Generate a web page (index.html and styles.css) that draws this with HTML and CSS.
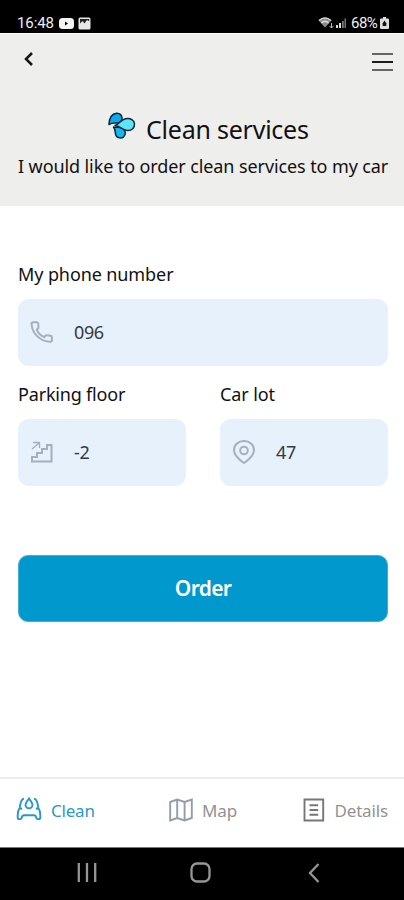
FILE: index.html
```html
<!DOCTYPE html>
<html lang="en">
<head>
<meta charset="utf-8">
<title>Clean services</title>
<link rel="stylesheet" href="styles.css">
</head>
<body>
<div class="phone">
  <div class="status">
    <span class="time">16:48</span>
    <svg class="video" width="15" height="11" viewBox="0 0 15 11"><rect width="15" height="11" rx="3.5" fill="#f4f4f4"/><path d="M6 3.500v4l3-2z" fill="#000"/></svg>
    <svg class="photo" width="13" height="13" viewBox="0 0 13 13"><rect x=".5" y=".5" width="12" height="12" rx="1.5" fill="#e6e6e6"/><path d="M2 6.500 4.500 4l2 2.500L9 3l2.200 1.200V2H2z" fill="#222"/></svg>
    <span class="space"></span>
    <svg width="30" height="14" viewBox="0 0 30 14"><path d="M.5 4.300Q7-1.500 13.500 4.300L7 11.500z" fill="#8c8c8c"/><path d="M1 4.500Q7-.8 13 4.500M3.300 7Q7 3.500 10.700 7" fill="none" stroke="#ddd" stroke-width="1.200"/><path d="M13.500 7v5M11.500 10l2 2 2-2" fill="none" stroke="#bbb"/><path d="M18 12V9h2v3zM21 12V7h2v5z" fill="#ddd"/><path d="M24 12V5h1.800v7zM26.500 12V2.500H28V12z" fill="#777"/></svg>
    <span class="percent">68%</span>
    <svg width="9" height="12" viewBox="0 0 9 12"><path d="M3 0h3v1.500h2a1 1 0 0 1 1 1V11a1 1 0 0 1-1 1H1a1 1 0 0 1-1-1V2.500a1 1 0 0 1 1-1h2z" fill="#ddd"/><path d="M4.500 3.500 2.700 6.200V9h3.600V6.200z" fill="#111"/></svg>
  </div>
  <header class="header">
    <div class="toolbar">
      <svg width="10" height="16" viewBox="0 0 10 16"><path d="M8 2 2 8l6 6" fill="none" stroke="#151515" stroke-width="2.500"/></svg>
      <div class="menu"><i></i><i></i><i></i></div>
    </div>
    <div class="heading">
      <svg width="28" height="28" viewBox="0 0 28 28" stroke="#0b2733" stroke-width="1.500" stroke-linejoin="round"><path d="M1 12.500C1.300 6 4 1.800 8.500 1.300c3.500-.2 5.700 2 5.500 5.200-.3 3.500-3 5-6.500 4.500-2.500-.4-4 0-6.500 1.500z" fill="#0ba9ee"/><path d="M5.500 15c4.500.5 7.300-.2 9.500 1.600 3 2.300 3 6 .6 8.200-2.400 2-6.300 1.300-7.700-1.500C6.700 20.700 8 18 5.500 15z" fill="#16b5f3"/><path d="M7 13.400c4.800-1.400 5.800-5.700 10.600-6.600 5-.8 8.700 1.200 8.900 5 .2 4-2.500 7-7 6.800-4.800-.2-6.300-4.200-12.500-5.200z" fill="#5ce5f7"/></svg>
      <h1>Clean services</h1>
    </div>
    <p class="subtitle">I would like to order clean services to my car</p>
  </header>
  <main class="form">
    <label class="field"><span class="label">My phone number</span>
      <span class="input"><svg width="24" height="24" viewBox="0 0 24 24"><path d="M3 2.200h3.600c.9 0 1.500.5 1.600 1.300l.3 3.700c0 .7-.2 1.100-.7 1.500l-1 .9c1.400 3.600 4 6.100 7.600 7.400l1-1.100c.4-.5.900-.7 1.600-.6l3.500.4c.9.100 1.400.7 1.400 1.500v3c0 .9-.7 1.500-1.600 1.500C10.500 21.700 2 13.500 1.500 3.700 1.500 2.800 2.100 2.200 3 2.200z"/></svg><span class="value">096</span></span>
    </label>
    <div class="pair">
      <label class="field"><span class="label floor-label">Parking floor</span>
        <span class="input"><svg width="24" height="24" viewBox="0 0 24 24"><path d="M2 21.500V17h5v-4h5V9h5V5h4.500v16.500z"/><path d="m2 9 7-6M3 2.500h6.500V8" stroke-width="1.300"/></svg><span class="value">-2</span></span>
      </label>
      <label class="field"><span class="label">Car lot</span>
        <span class="input"><svg width="24" height="24" viewBox="0 0 24 24"><path d="M12 23S2 16.500 2 10.200C2 4.800 6.500 1 12 1s10 3.800 10 9.200C22 16.500 12 23 12 23z"/><circle cx="12" cy="10.500" r="3.800"/></svg><span class="value">47</span></span>
      </label>
    </div>
    <button class="order"><span>Order</span></button>
  </main>
  <nav class="tabs">
    <a class="tab active"><svg width="26" height="26" viewBox="0 0 26 26"><path d="M8 1.800C5.800 2 5 4 4.400 7L3.600 11C2.200 13 1.700 15 1.700 18v2.500q0 1.600 1.600 1.600h.9q1.300 0 1.700-1.800.4-2 2.300-2h9.600q1.900 0 2.300 2 .4 1.800 1.700 1.800h.9q1.600 0 1.600-1.600V18c0-3-.5-5-1.900-7L21.600 7C21 4 20.200 2 18 1.800M3.600 11l2.400 1M22.400 11 20 12"/><path d="M13 1.500c-1.300 2-3.500 4-3.500 6.300a3.500 3.500 0 0 0 7 0c0-2.300-2.200-4.300-3.500-6.300z"/></svg><span class="t-clean">Clean</span></a>
    <a class="tab map"><svg width="24" height="24" viewBox="0 0 24 24"><path d="m1.200 4 7-2.500 7.400 2.500 7.200-2.500V20l-7.200 2.500L8.200 20l-7 2.500zM8.200 1.500V20M15.600 4v18.500"/></svg><span>Map</span></a>
    <a class="tab"><svg width="22" height="24" viewBox="0 0 22 24" class="details-icon"><path d="M1.500 1.500h18.700v21H1.500zM6.500 7.200h8.700M6.500 12h8.700M6.500 16.800h8.700"/></svg><span class="t-details">Details</span></a>
  </nav>
  <footer class="system">
    <svg width="20" height="20" viewBox="0 0 20 20"><path d="M1.800 0v19M10 0v19M18.200 0v19"/></svg>
    <svg class="home" width="22" height="22" viewBox="0 0 22 22"><rect x="1.500" y="1.500" width="18" height="18" rx="5.500"/></svg>
    <svg width="12" height="20" viewBox="0 0 12 20"><path d="M10.500 1 2 10l8.500 9"/></svg>
  </footer>
</div>
</body>
</html>
```
FILE: styles.css
```css
* { box-sizing: border-box; }
body { margin: 0; font-family: "Noto Sans", "Open Sans", sans-serif; color: #111; background: #fff; }
svg { display: block; flex: none; }
.phone { width: 404px; height: 900px; display: flex; flex-direction: column; overflow: hidden; }
.status { height: 33px; background: #000; color: #eee; display: flex; align-items: center; padding: 13px 15px 0 17px; font: 400 15px/18px Roboto, sans-serif; flex: none; }
.time { width: 38px; letter-spacing: -.1px; }
.video { margin-left: 4px; }
.photo { margin-left: 4px; }
.space { flex: 1; }
.percent { width: 27px; margin: 0 2px 0 3px; letter-spacing: -.5px; font-size: 15px; }
.header { height: 173px; background: #eeeeec; border-top: 1px solid #fff; flex: none; }
.toolbar { display: flex; justify-content: space-between; align-items: flex-start; padding: 17px 11px 0 24px; height: 78px; }
.menu { display: flex; flex-direction: column; gap: 6px; padding-top: 2px; }
.menu i { width: 21px; height: 2px; background: #666; }
.menu i:nth-child(2) { background: #1b1b1b; }
.heading { display: flex; align-items: flex-start; height: 38px; padding-left: 108px; gap: 10px; }
h1 { margin: 0; font-size: 25px; font-weight: 400; line-height: 34px; letter-spacing: -.23px; white-space: nowrap; }
.subtitle { margin: 3px 0 0 18px; font-size: 18px; line-height: 26px; letter-spacing: -.1px; white-space: nowrap; }
.form { flex: 1; padding: 56px 16px 0 18px; }
.field { display: block; }
.label { display: block; height: 37px; font-size: 18px; line-height: 25px; letter-spacing: -.1px; white-space: nowrap; }
.floor-label { letter-spacing: -.18px; }
.input { display: flex; align-items: center; height: 67px; border-radius: 11px; background: #e7f1fb; padding: 0 0 1px 12px; gap: 20px; }
.input svg { fill: none; stroke: #a5afbd; stroke-width: 2; }
.value { font-size: 18px; letter-spacing: -.4px; color: #333a43; line-height: 24px; }
.pair { display: grid; grid-template-columns: 168px 168px; gap: 34px; margin-top: 16px; }
.order { display: flex; width: 370px; height: 67px; align-items: center; justify-content: center; margin-top: 69px; padding: 0 0 1px; background: #0098cd; border: 1px solid #42aed4; border-radius: 10px; color: #fff; font: 600 21px/28px "Noto Sans", sans-serif; letter-spacing: -.7px; }
.tabs { height: 70px; border-top: 2px solid #ececec; display: flex; justify-content: space-between; align-items: flex-start; padding: 18px 16px 0; flex: none; }
.tab { display: flex; align-items: center; height: 26px; gap: 9px; font-size: 17px; color: #929292; }
.tab svg { fill: none; stroke: #929cac; stroke-width: 1.9; }
.tab .details-icon { stroke: #777; }
.map { margin-left: 8px; }
.t-clean { letter-spacing: -.2px; }
.t-details { letter-spacing: -.15px; }
.active { color: #2b9ac5; }
.active svg { stroke: #2699c8; }
.system { height: 53px; background: #000; border-top: 1px solid #777; display: flex; align-items: flex-start; justify-content: space-between; padding: 15px 84px 0 77px; flex: none; }
.system svg { fill: none; stroke: #969696; stroke-width: 2.3; }
.system .home { margin: -1px 4px 0 0; }
```
